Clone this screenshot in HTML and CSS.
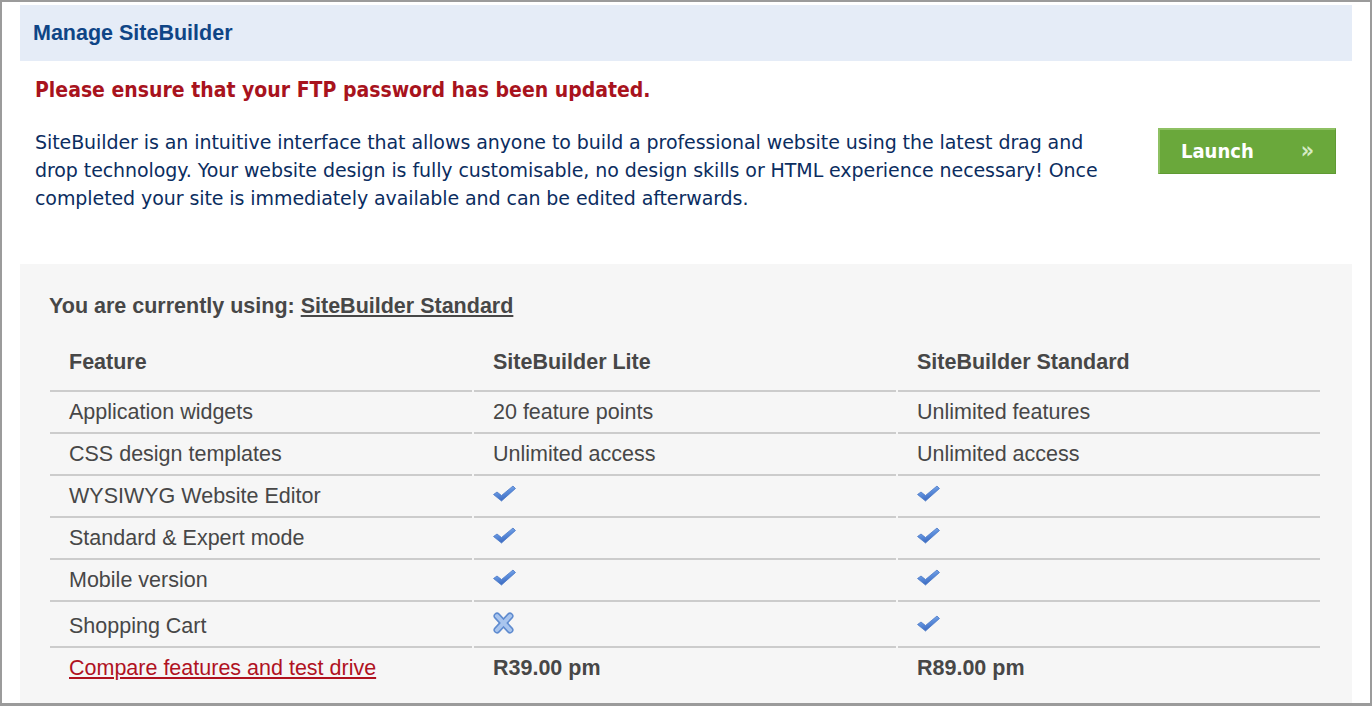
FILE: index.html
```html
<!DOCTYPE html>
<html lang="en">
<head>
<meta charset="utf-8">
<title>Manage SiteBuilder</title>
<link rel="stylesheet" href="styles.css">
</head>
<body>
<div class="frame">
  <div class="titlebar"><h1>Manage SiteBuilder</h1></div>
  <p class="warning">Please ensure that your FTP password has been updated.</p>
  <div class="intro">
    <p class="desc">SiteBuilder is an intuitive interface that allows anyone to build a professional website using the latest drag and drop technology. Your website design is fully customisable, no design skills or HTML experience necessary! Once completed your site is immediately available and can be edited afterwards.</p>
    <a class="launch" href="#"><span class="launch-label">Launch</span><span class="launch-arrow">&raquo;</span></a>
  </div>
  <section class="plans">
    <p class="current">You are currently using: <a href="#">SiteBuilder Standard</a></p>
    <div class="grid">
      <div class="cell head">Feature</div>
      <div class="cell head">SiteBuilder Lite</div>
      <div class="cell head">SiteBuilder Standard</div>

      <div class="cell">Application widgets</div>
      <div class="cell">20 feature points</div>
      <div class="cell">Unlimited features</div>

      <div class="cell">CSS design templates</div>
      <div class="cell">Unlimited access</div>
      <div class="cell">Unlimited access</div>

      <div class="cell">WYSIWYG Website Editor</div>
      <div class="cell"><svg class="tick" viewBox="0 0 23 17"><use href="#tk"/></svg></div>
      <div class="cell"><svg class="tick" viewBox="0 0 23 17"><use href="#tk"/></svg></div>

      <div class="cell">Standard &amp; Expert mode</div>
      <div class="cell"><svg class="tick" viewBox="0 0 23 17"><use href="#tk"/></svg></div>
      <div class="cell"><svg class="tick" viewBox="0 0 23 17"><use href="#tk"/></svg></div>

      <div class="cell">Mobile version</div>
      <div class="cell"><svg class="tick" viewBox="0 0 23 17"><use href="#tk"/></svg></div>
      <div class="cell"><svg class="tick" viewBox="0 0 23 17"><use href="#tk"/></svg></div>

      <div class="cell tall">Shopping Cart</div>
      <div class="cell tall"><svg class="cross" viewBox="0 0 21 22"><line x1="4" y1="4" x2="17" y2="18" stroke="#5f8bcf" stroke-width="7" stroke-linecap="round"/><line x1="17" y1="4" x2="4" y2="18" stroke="#5f8bcf" stroke-width="7" stroke-linecap="round"/><line x1="4" y1="4" x2="17" y2="18" stroke="#a9c5ee" stroke-width="4" stroke-linecap="round"/><line x1="17" y1="4" x2="4" y2="18" stroke="#a9c5ee" stroke-width="4" stroke-linecap="round"/></svg></div>
      <div class="cell tall"><svg class="tick" viewBox="0 0 23 17"><use href="#tk"/></svg></div>

      <div class="cell last"><a class="compare" href="#">Compare features and test drive</a></div>
      <div class="cell last price">R39.00 pm</div>
      <div class="cell last price">R89.00 pm</div>
    </div>
  </section>
</div>
<svg class="defs" width="0" height="0">
  <defs>
    <linearGradient id="tg" x1="0" y1="0" x2="0.4" y2="1">
      <stop offset="0" stop-color="#9cc0f2"/>
      <stop offset="0.55" stop-color="#5b8ddb"/>
      <stop offset="1" stop-color="#3a68bf"/>
    </linearGradient>
    <g id="tk"><path d="M0.5 9.5 L4 7 L8.5 10.5 L20 1 L22.5 3.5 L8.5 16 Z" fill="url(#tg)" stroke="#4a78c8" stroke-width="0.8" stroke-linejoin="round"/></g>
  </defs>
</svg>
</body>
</html>
```

FILE: styles.css
```css
html, body {
  margin: 0;
  padding: 0;
  background: #ffffff;
}

.frame {
  box-sizing: border-box;
  width: 1372px;
  height: 706px;
  overflow: hidden;
  border: 2px solid #9b9b9b;
  border-bottom-width: 3px;
  padding: 3px 18px 0 18px;
  background: #ffffff;
}

.titlebar {
  background: #e5ecf7;
  height: 56px;
  padding: 0 13px;
}

.titlebar h1 {
  margin: 0;
  font-family: "Liberation Sans", Arial, sans-serif;
  font-weight: bold;
  font-size: 21.5px;
  line-height: 57px;
  color: #0f4586;
}

.warning {
  margin: 15px 0 0 15px;
  font-family: "DejaVu Sans Condensed", "DejaVu Sans", sans-serif;
  font-stretch: semi-condensed;
  font-weight: bold;
  font-size: 21px;
  line-height: 28px;
  color: #a8131d;
}

.intro {
  display: flex;
  align-items: flex-start;
  margin-top: 24px;
  padding-left: 15px;
}

.desc {
  flex: 0 0 1085px;
  margin: 0;
  font-family: "DejaVu Sans", Verdana, sans-serif;
  font-size: 19px;
  letter-spacing: -0.08px;
  line-height: 28px;
  color: #0b2d5f;
}

.launch {
  box-sizing: border-box;
  margin-left: auto;
  margin-right: 16px;
  width: 178px;
  height: 46px;
  display: flex;
  align-items: center;
  background: #6aa83b;
  border-top: 2px solid #8ec063;
  border-left: 2px solid #8ec063;
  border-right: 1px solid #5f9a33;
  border-bottom: 1px solid #5f9a33;
  padding: 0 0 2px 21px;
  text-decoration: none;
  font-family: "DejaVu Sans Condensed", "DejaVu Sans", sans-serif;
  font-stretch: semi-condensed;
  font-weight: bold;
  color: #ffffff;
}

.launch-label {
  font-size: 20px;
}

.launch-arrow {
  margin-left: auto;
  margin-right: 21px;
  font-size: 23px;
  font-weight: bold;
  line-height: 1;
  color: #d6ebc4;
}

.plans {
  margin-top: 52px;
  background: #f6f6f6;
  padding: 28px 32px 20px 30px;
  font-family: "Liberation Sans", Arial, sans-serif;
  color: #474747;
}

.current {
  margin: 0 0 0 -1px;
  font-size: 21.5px;
  font-weight: bold;
  line-height: 29px;
}

.current a {
  color: #474747;
}

.grid {
  display: grid;
  grid-template-columns: 422px 422px 422px;
  column-gap: 2px;
  margin-top: 21px;
}

.cell {
  height: 40px;
  padding: 0 19px;
  border-bottom: 2px solid #cccccc;
  font-size: 21.5px;
  line-height: 40px;
  display: flex;
  align-items: center;
}

.cell.head {
  font-weight: bold;
  padding-bottom: 8px;
}

.cell.tall {
  height: 40px;
  padding-top: 4px;
}

.cell.last {
  border-bottom: none;
}

.cell.price {
  font-weight: bold;
}

.compare {
  color: #b0121f;
}

.tick {
  width: 23px;
  height: 17px;
  margin-top: -6px;
}

.cross {
  width: 21px;
  height: 22px;
  margin-top: -6px;
}

.defs {
  position: absolute;
  width: 0;
  height: 0;
}
```
